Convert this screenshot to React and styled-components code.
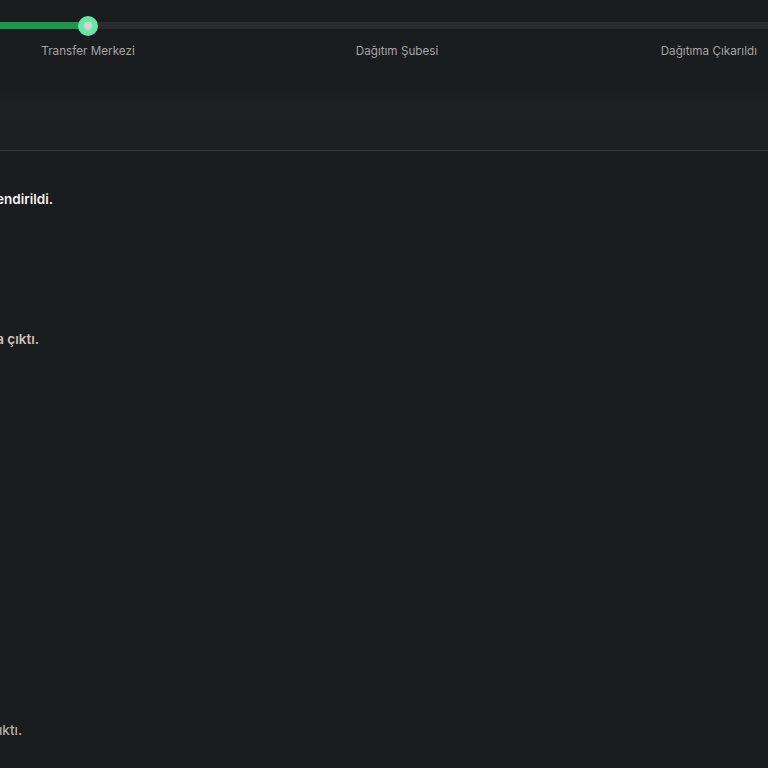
import React from 'react';
import styled, { createGlobalStyle } from 'styled-components';

const GlobalStyle = createGlobalStyle`
  html, body {
    margin: 0;
    padding: 0;
    background: #1b1c1e;
    overflow: hidden;
  }
  body {
    font-family: Inter, 'Noto Sans', sans-serif;
    color: #e8e8e8;
  }
`;

const Page = styled.div`
  width: 768px;
  height: 768px;
  background: #1b1c1e;
`;

const Tracker = styled.div`
  padding-top: 22px;
`;

const Track = styled.div`
  position: relative;
  height: 7px;
  background: #2a2b2d;
`;

const Fill = styled.div`
  height: 100%;
  background: #179a4f;
`;

const Knob = styled.div`
  position: absolute;
  top: 50%;
  width: 20px;
  height: 20px;
  margin-left: -10px;
  margin-top: -10px;
  border-radius: 50%;
  background: #5fe9a4;
  display: flex;
  align-items: center;
  justify-content: center;

  &::after {
    content: '';
    width: 8px;
    height: 8px;
    border-radius: 50%;
    background: #f2c9d6;
    filter: blur(1px);
  }
`;

const Steps = styled.div`
  display: grid;
  grid-template-columns: 176px 442px 1fr;
  padding: 15px 11px 0 0;
`;

const Step = styled.span`
  font-size: 11.7px;
  color: #a3a3a3;
  text-align: ${(p) => p.$align};
  white-space: nowrap;
`;

const Band = styled.div`
  height: 61px;
  margin-top: 31px;
  background: linear-gradient(#1c1d1f, #1f2022 30%, #1d1e20);
  border-bottom: 1px solid #38393b;
`;

const Events = styled.div`
  display: flex;
  flex-direction: column;
`;

const Event = styled.div`
  display: flex;
  justify-content: flex-end;
  width: ${(p) => p.$end}px;
  margin-top: ${(p) => p.$top}px;
`;

const EventText = styled.span`
  white-space: nowrap;
  font-size: 13.5px;
  line-height: 18px;
  font-weight: ${(p) => p.$weight};
  color: ${(p) => p.$color};
`;

const events = [
  { text: 'Gönderi transfer merkezine yönlendirildi.', end: 53, top: 39, weight: 600, color: '#f2f2f2' },
  { text: 'Gönderi transfer merkezinden yola çıktı.', end: 39, top: 122, weight: 600, color: '#c9c2bb' },
  { text: 'Gönderi çıkış şubesinden yola çıktı.', end: 22, top: 373, weight: 500, color: '#b6b0aa' },
];

export default function App() {
  return (
    <Page>
      <GlobalStyle />
      <Tracker>
        <Track>
          <Fill style={{ width: 88 }} />
          <Knob style={{ left: 88 }} />
        </Track>
        <Steps>
          <Step $align="center">Transfer Merkezi</Step>
          <Step $align="center">Dağıtım Şubesi</Step>
          <Step $align="right">Dağıtıma Çıkarıldı</Step>
        </Steps>
      </Tracker>
      <Band />
      <Events>
        {events.map((e) => (
          <Event key={e.text} $end={e.end} $top={e.top}>
            <EventText $weight={e.weight} $color={e.color}>
              {e.text}
            </EventText>
          </Event>
        ))}
      </Events>
    </Page>
  );
}
